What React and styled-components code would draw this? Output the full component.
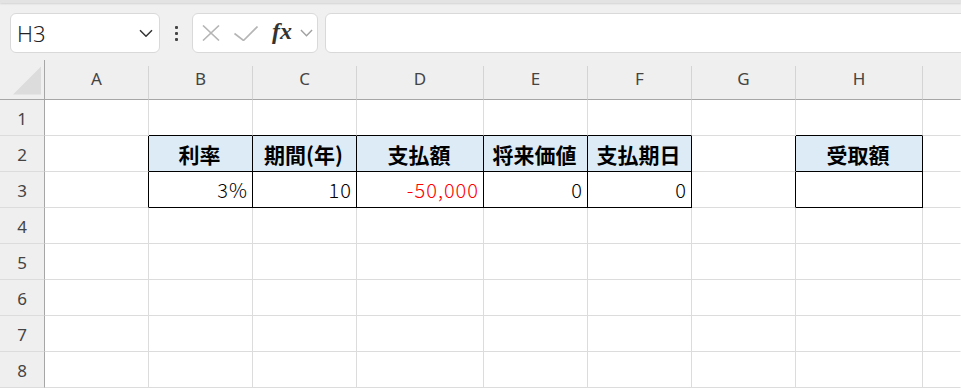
import React from "react"
import styled, { createGlobalStyle } from "styled-components"

const GlobalStyle = createGlobalStyle`
  html, body {
    margin: 0;
    padding: 0;
    background: #f0f0f0;
    overflow: hidden;
  }
  body {
    font-family: "Noto Sans", "Noto Sans CJK JP", sans-serif;
  }
`

const COLS = [
  { key: "A", width: 104 },
  { key: "B", width: 104 },
  { key: "C", width: 104 },
  { key: "D", width: 127 },
  { key: "E", width: 104 },
  { key: "F", width: 104 },
  { key: "G", width: 104 },
  { key: "H", width: 127 },
  { key: "I", width: null },
]

const ROWS = [1, 2, 3, 4, 5, 6, 7, 8]

const DATA = {
  B2: { text: "利率", head: true },
  C2: { text: "期間(年)", head: true },
  D2: { text: "支払額", head: true },
  E2: { text: "将来価値", head: true },
  F2: { text: "支払期日", head: true },
  H2: { text: "受取額", head: true },
  B3: { text: "3%" },
  C3: { text: "10" },
  D3: { text: "-50,000", red: true },
  E3: { text: "0" },
  F3: { text: "0" },
  H3: { text: "" },
}

const boxed = (col, row) => {
  if (col < 0 || col >= COLS.length) return false
  return `${COLS[col].key}${row}` in DATA
}

const GRID = "#dcdcdc"
const LINE = "#000"

const Page = styled.div`
  width: 961px;
  height: 388px;
  display: flex;
  flex-direction: column;
`

const TopStrip = styled.div`
  height: 3px;
  background: #e3e3e3;
  box-shadow: 0 1px 2px rgba(0, 0, 0, 0.12);
`

const FormulaBar = styled.div`
  height: 57px;
  display: flex;
  align-items: flex-start;
  padding: 10px 0 0 10px;
  box-sizing: border-box;
`

const Field = styled.div`
  height: 40px;
  box-sizing: border-box;
  background: #fff;
  border: 1px solid #d9d9d9;
  border-radius: 6px;
  display: flex;
  align-items: center;
`

const NameBox = styled(Field)`
  width: 150px;
  padding: 0 6px 0 6px;
  justify-content: space-between;
  font-size: 22px;
  font-weight: 300;
  color: #222;
`

const Dots = styled.div`
  width: 32px;
  height: 40px;
  display: flex;
  flex-direction: column;
  align-items: center;
  justify-content: center;
  gap: 3px;

  span {
    width: 3px;
    height: 3px;
    background: #444;
    border-radius: 1px;
  }
`

const FxBox = styled(Field)`
  width: 126px;
  padding-left: 9px;
  gap: 14px;
`

const FxLabel = styled.span`
  font-family: "Liberation Serif", "DejaVu Serif", serif;
  font-style: italic;
  font-weight: bold;
  font-size: 24px;
  color: #333;
  margin-right: -6px;
  line-height: 1;
  padding-bottom: 4px;
`

const FormulaInput = styled(Field)`
  flex: 1;
  margin-left: 7px;
  margin-right: -12px;
`

const Sheet = styled.div`
  flex: 1;
  display: grid;
  grid-template-columns: 45px ${COLS.map((c) => (c.width ? `${c.width}px` : "1fr")).join(" ")};
  grid-template-rows: 40px repeat(${ROWS.length}, 36px);
  background: #fff;
`

const Corner = styled.div`
  background: #efefef;
  border-right: 1px solid #a6a6a6;
  border-bottom: 1px solid #a6a6a6;
  box-sizing: border-box;
  display: flex;
  align-items: flex-end;
  padding: 0 3px 4px 13px;
`

const ColHead = styled.div`
  background: #efefef;
  display: flex;
  flex-direction: column;
  justify-content: flex-end;
`

const ColLabel = styled.div`
  height: 34px;
  box-sizing: border-box;
  border-right: 1px solid ${({ $last }) => ($last ? "transparent" : "#d4d4d4")};
  border-bottom: 1px solid #a6a6a6;
  display: flex;
  align-items: center;
  justify-content: center;
  padding-bottom: 9px;
  font-size: 17px;
  color: #444;
`

const RowHead = styled.div`
  background: #efefef;
  box-sizing: border-box;
  border-right: 1px solid #a6a6a6;
  border-bottom: 1px solid ${GRID};
  display: flex;
  align-items: center;
  justify-content: center;
  padding-top: 2px;
  font-size: 17px;
  color: #444;
`

const Cell = styled.div`
  box-sizing: border-box;
  border-right: 1px solid ${({ $right }) => $right};
  border-bottom: 1px solid ${({ $bottom }) => $bottom};
  background: ${({ $head }) => ($head ? "#ddebf7" : "#fff")};
  display: flex;
  align-items: center;
  justify-content: ${({ $head }) => ($head ? "center" : "flex-end")};
  padding: 0 4px 0 2px;
  font-family: "Noto Sans CJK JP", "Noto Sans", sans-serif;
  font-size: ${({ $head }) => ($head ? "21px" : "20px")};
  font-weight: ${({ $head }) => ($head ? 700 : 300)};
  letter-spacing: ${({ $head }) => ($head ? "0" : "1px")};
  color: ${({ $red }) => ($red ? "#ff0000" : "#000")};
  white-space: nowrap;
  overflow: hidden;
`

const Chevron = ({ color, size = 14 }) => (
  <svg width={size} height={size * 0.6} viewBox="0 0 14 8" fill="none">
    <path d="M1 1l6 6 6-6" stroke={color} strokeWidth="1.5" />
  </svg>
)

const CrossIcon = () => (
  <svg width="18" height="16" viewBox="0 0 18 16" fill="none">
    <path d="M1 0.5l16 15M17 0.5l-16 15" stroke="#b5b5b5" strokeWidth="1.6" />
  </svg>
)

const CheckIcon = () => (
  <svg width="24" height="15" viewBox="0 0 24 15" fill="none">
    <path d="M0.5 7.5l9 7L23.5 0.5" stroke="#b5b5b5" strokeWidth="1.6" />
  </svg>
)

const SelectAll = () => (
  <svg width="29" height="29" viewBox="0 0 29 29">
    <polygon points="0,29 29,29 29,0" fill="#dcdcdc" />
  </svg>
)

const App = () => (
  <Page>
    <GlobalStyle />
    <TopStrip />
    <FormulaBar>
      <NameBox>
        <span>H3</span>
        <Chevron color="#333" />
      </NameBox>
      <Dots>
        <span />
        <span />
        <span />
      </Dots>
      <FxBox>
        <CrossIcon />
        <CheckIcon />
        <FxLabel>fx</FxLabel>
        <Chevron color="#a0a0a0" size={13} />
      </FxBox>
      <FormulaInput />
    </FormulaBar>
    <Sheet>
      <Corner>
        <SelectAll />
      </Corner>
      {COLS.map((c, i) => (
        <ColHead key={c.key}>
          <ColLabel $last={i === COLS.length - 1}>{i < COLS.length - 1 ? c.key : ""}</ColLabel>
        </ColHead>
      ))}
      {ROWS.map((r) => (
        <React.Fragment key={r}>
          <RowHead>{r}</RowHead>
          {COLS.map((c, ci) => {
            const d = DATA[`${c.key}${r}`]
            const right = boxed(ci, r) || boxed(ci + 1, r) ? LINE : GRID
            const bottom = boxed(ci, r) || boxed(ci, r + 1) ? LINE : GRID
            return (
              <Cell
                key={c.key}
                $right={ci === COLS.length - 1 ? "transparent" : right}
                $bottom={bottom}
                $head={d?.head}
                $red={d?.red}
              >
                {d?.text}
              </Cell>
            )
          })}
        </React.Fragment>
      ))}
    </Sheet>
  </Page>
)

export default App
